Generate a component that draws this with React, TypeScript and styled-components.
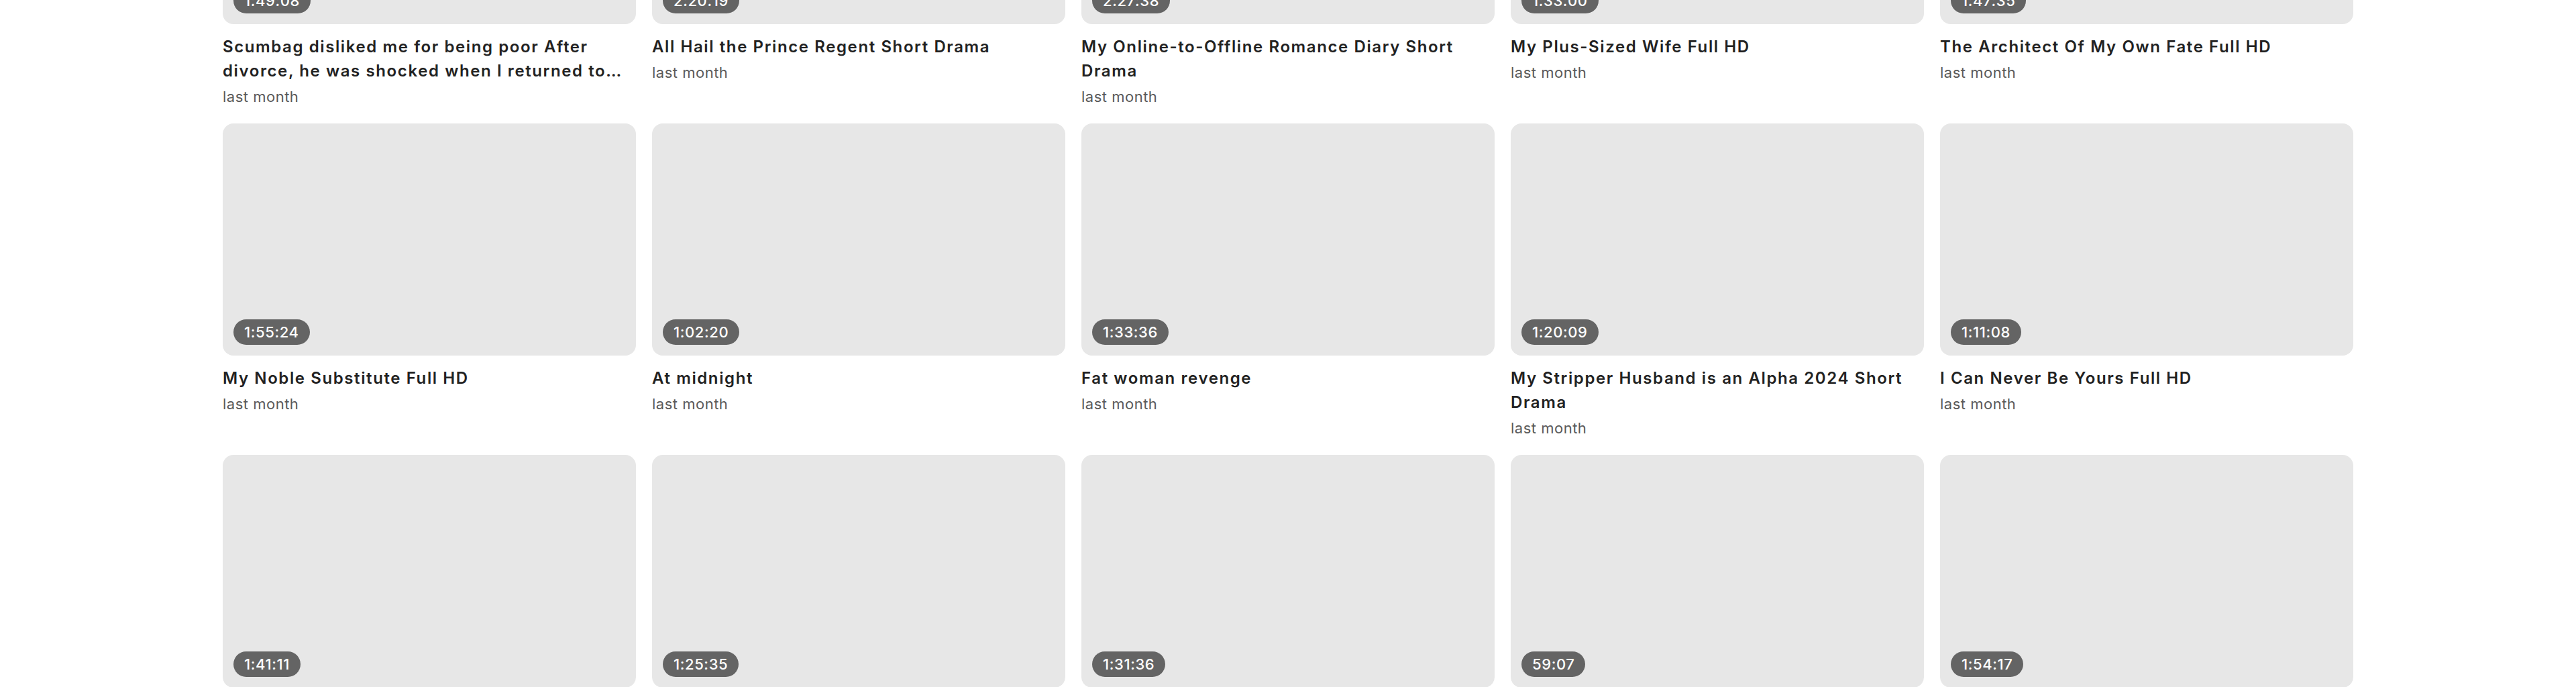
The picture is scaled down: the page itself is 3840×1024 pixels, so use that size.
import * as React from "react";
import styled, { createGlobalStyle } from "styled-components";

const GlobalStyle = createGlobalStyle`
  * {
    box-sizing: border-box;
  }

  body {
    margin: 0;
    background: #ffffff;
    font-family: Inter, "Noto Sans", "Liberation Sans", sans-serif;
    overflow: hidden;
  }
`;

const SPage = styled.main`
  width: 3176px;
  margin: 0 auto;
`;

// the list is scrolled: the first row's thumbnails are above the fold
const SGrid = styled.section`
  display: grid;
  grid-template-columns: repeat(5, 1fr);
  column-gap: 24px;
  row-gap: 24px;
  margin-top: -311px;
`;

const SCard = styled.article`
  display: flex;
  flex-direction: column;
  min-width: 0;
`;

const SThumb = styled.div`
  position: relative;
  width: 100%;
  aspect-ratio: 16 / 9;
  border-radius: 16px;
  background-color: #e7e7e7;
`;

const SDuration = styled.span`
  position: absolute;
  left: 16px;
  bottom: 16px;
  padding: 4px 16px;
  border-radius: 999px;
  background-color: #646464;
  color: #ffffff;
  font-size: 22px;
  line-height: 30px;
  font-weight: 500;
  letter-spacing: 0.6px;
`;

const STitle = styled.h3`
  margin: 16px 0 0;
  font-size: 24px;
  line-height: 36px;
  font-weight: 600;
  letter-spacing: 1.6px;
  color: #222222;
  display: -webkit-box;
  -webkit-line-clamp: 2;
  -webkit-box-orient: vertical;
  overflow: hidden;
`;

const SMeta = styled.span`
  margin-top: 4px;
  font-size: 22px;
  line-height: 32px;
  letter-spacing: 0.5px;
  color: #5a5a5a;
`;

interface IVideo {
  title: string;
  duration: string;
  posted: string;
}

const videos: IVideo[] = [
  {
    title:
      "Scumbag disliked me for being poor After divorce, he was shocked when I returned to power as the heiress",
    duration: "1:49:08",
    posted: "last month"
  },
  { title: "All Hail the Prince Regent Short Drama", duration: "2:20:19", posted: "last month" },
  {
    title: "My Online-to-Offline Romance Diary Short Drama",
    duration: "2:27:38",
    posted: "last month"
  },
  { title: "My Plus-Sized Wife Full HD", duration: "1:33:00", posted: "last month" },
  { title: "The Architect Of My Own Fate Full HD", duration: "1:47:35", posted: "last month" },
  { title: "My Noble Substitute Full HD", duration: "1:55:24", posted: "last month" },
  { title: "At midnight", duration: "1:02:20", posted: "last month" },
  { title: "Fat woman revenge", duration: "1:33:36", posted: "last month" },
  {
    title: "My Stripper Husband is an Alpha 2024 Short Drama",
    duration: "1:20:09",
    posted: "last month"
  },
  { title: "I Can Never Be Yours Full HD", duration: "1:11:08", posted: "last month" },
  { title: "The Return of the Heiress Full HD", duration: "1:41:11", posted: "last month" },
  { title: "Love After Divorce Short Drama", duration: "1:25:35", posted: "last month" },
  { title: "My Secret Billionaire Husband", duration: "1:31:36", posted: "last month" },
  { title: "Married to the Alpha King", duration: "59:07", posted: "last month" },
  { title: "The Substitute Bride Full HD", duration: "1:54:17", posted: "last month" }
];

const VideoCard = ({ video }: { video: IVideo }) => (
  <SCard>
    <SThumb>
      <SDuration>{video.duration}</SDuration>
    </SThumb>
    <STitle>{video.title}</STitle>
    <SMeta>{video.posted}</SMeta>
  </SCard>
);

const App = () => (
  <>
    <GlobalStyle />
    <SPage>
      <SGrid>
        {videos.map(video => (
          <VideoCard key={video.duration + video.title} video={video} />
        ))}
      </SGrid>
    </SPage>
  </>
);

export default App;
